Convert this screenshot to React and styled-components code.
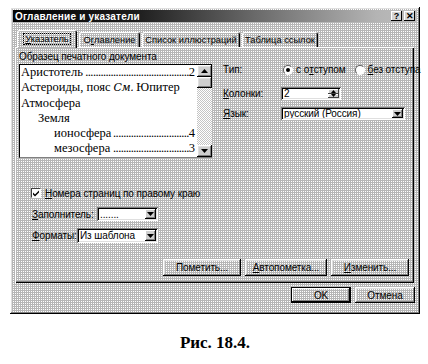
import React from 'react';
import styled, { createGlobalStyle } from 'styled-components';

const Global = createGlobalStyle`
  html, body { margin: 0; padding: 0; background: #fff; }
  body { font-family: "Liberation Sans", Arial, sans-serif; font-size: 10px; color: #000; letter-spacing: -0.1px; }
  #root { width: 428px; height: 364px; overflow: hidden; }
`;

const dither = `
  background-color: #b6b6b6;
  background-image: conic-gradient(#fff 0 25%, #b6b6b6 0 100%);
  background-size: 2px 2px;
`;

const raised = `box-shadow: inset -1px -1px #000, inset 1px 1px #fff, inset -2px -2px #808080, inset 2px 2px #dfdfdf;`;
const sunken = `box-shadow: inset 1px 1px #808080, inset -1px -1px #fff, inset 2px 2px #000, inset -2px -2px #dfdfdf;`;

const Page = styled.div`
  width: 428px;
  height: 364px;
  box-sizing: border-box;
  padding: 7px 0 0 10px;
  display: flex;
  flex-direction: column;
  align-items: flex-start;
`;

const Dialog = styled.div`
  width: 410px;
  height: 307px;
  box-sizing: border-box;
  padding: 3px;
  display: flex;
  flex-direction: column;
  ${raised}
  ${dither}
`;

const TitleBar = styled.div`
  height: 12px;
  display: flex;
  align-items: center;
  padding: 0 2px 0 2px;
  background: linear-gradient(90deg, #050505 0%, #1c1c1c 30%, #6a6a6a 60%, #b4b4b4 90%, #bcbcbc 100%);
  color: #fff;
  font-weight: bold;
  font-size: 10px;
  gap: 1px;
`;

const TitleText = styled.span`
  flex: 1;
  white-space: nowrap;
  letter-spacing: 0.2px;
`;

const TitleButton = styled.div`
  width: 11px;
  height: 10px;
  box-sizing: border-box;
  display: flex;
  align-items: center;
  justify-content: center;
  color: #000;
  font-size: 9px;
  font-weight: bold;
  line-height: 1;
  margin-left: ${p => p.$gap || 0}px;
  background: #d4d4d4;
  box-shadow: inset -1px -1px #000, inset 1px 1px #fff;
`;

const TabStrip = styled.div`
  margin-top: 8px;
  height: 17px;
  display: flex;
  align-items: flex-end;
  padding-left: 4px;
  position: relative;
  z-index: 2;
`;

const Tab = styled.div`
  width: ${p => p.$w}px;
  height: ${p => (p.$active ? 18 : 15)}px;
  margin-bottom: ${p => (p.$active ? -1 : 0)}px;
  margin-right: 2px;
  box-sizing: border-box;
  display: flex;
  align-items: center;
  justify-content: center;
  white-space: nowrap;
  font-size: 9.3px;
  letter-spacing: 0;
  border-radius: 2px 2px 0 0;
  ${dither}
  box-shadow: inset 1px 1px #fff, inset -1px 0 #000, inset -2px 0 #808080;
`;

const Focus = styled.span`
  outline: 1px dotted #000;
  padding: 0 1px;
`;

const Panel = styled.div`
  height: 236px;
  margin: 0 3px 0 2px;
  box-sizing: border-box;
  padding: 5px 5px 7px 4px;
  display: flex;
  flex-direction: column;
  position: relative;
  z-index: 1;
  box-shadow: inset 1px 1px #fff, inset -1px -1px #000, inset -2px -2px #808080;
`;

const TopSection = styled.div`
  display: flex;
  gap: 11px;
`;

const LeftCol = styled.div`
  width: 194px;
  display: flex;
  flex-direction: column;
`;

const GroupLabel = styled.div`
  height: 12px;
  line-height: 10px;
  white-space: nowrap;
`;

const Preview = styled.div`
  height: 94px;
  display: flex;
  background: #fff;
  box-sizing: border-box;
  border-top: 1px solid #000;
  border-left: 1px solid #000;
  border-bottom: 1px solid #808080;
`;

const PreviewText = styled.div`
  flex: 1;
  min-width: 0;
  overflow: hidden;
  padding: 0 2px 0 1px;
  font-family: "Liberation Serif", "Times New Roman", serif;
  font-size: 12.5px;
  line-height: 15.3px;
  letter-spacing: 0;
`;

const Line = styled.div`
  display: flex;
  white-space: nowrap;
  padding-left: ${p => p.$indent || 0}px;
`;

const Leader = styled.span`
  flex: 1;
  min-width: 0;
  text-align: right;
  padding-left: 1px;
  letter-spacing: -0.6px;
`;

const See = styled.span`
  font-style: italic;
  font-family: "DejaVu Serif", serif;
  font-size: 11px;
  letter-spacing: -0.5px;
`;

const Scrollbar = styled.div`
  width: 15px;
  display: flex;
  flex-direction: column;
  background-color: #d0d0d0;
  background-image: conic-gradient(#fff 0 25%, #c4c4c4 0 50%, #fff 0 75%, #c4c4c4 0 100%);
  background-size: 2px 2px;
`;

const ScrollBtn = styled.div`
  height: 12px;
  display: flex;
  align-items: center;
  justify-content: center;
  background: #cfcfcf;
  ${raised}
`;

const Thumb = styled.div`
  height: 11px;
  background: #cfcfcf;
  ${raised}
`;

const Spacer = styled.div`
  flex: 1;
`;

const RightCol = styled.div`
  display: flex;
  flex-direction: column;
  padding-top: 11px;
`;

const OptionRow = styled.div`
  height: 13px;
  display: flex;
  align-items: center;
  margin-top: ${p => p.$mt || 0}px;
  white-space: nowrap;
`;

const OptionLabel = styled.span`
  width: ${p => p.$w || 58}px;
  flex-shrink: 0;
`;

const RadioGroup = styled.label`
  display: flex;
  align-items: center;
  margin-left: ${p => p.$ml || 0}px;
`;

const RadioCircle = styled.span`
  width: 10px;
  height: 10px;
  border-radius: 50%;
  box-sizing: border-box;
  background: #fff;
  border: 1px solid;
  border-color: #606060 #fff #fff #606060;
  display: flex;
  align-items: center;
  justify-content: center;
  margin-right: 3px;
  &::after {
    content: "";
    width: 4px;
    height: 4px;
    border-radius: 50%;
    background: ${p => (p.$checked ? '#000' : 'transparent')};
  }
`;

const Field = styled.div`
  width: ${p => p.$w}px;
  height: ${p => p.$h || 13}px;
  box-sizing: border-box;
  display: flex;
  align-items: stretch;
  background: #fff;
  padding: 2px;
  ${sunken}
`;

const FieldText = styled.span`
  flex: 1;
  display: flex;
  align-items: center;
  padding-left: 1px;
  font-size: 10px;
  white-space: nowrap;
  overflow: hidden;
`;

const SpinCol = styled.div`
  width: 11px;
  display: flex;
  flex-direction: column;
`;

const SpinHalf = styled.div`
  flex: 1;
  display: flex;
  align-items: center;
  justify-content: center;
  background: #cfcfcf;
  box-shadow: inset -1px -1px #404040, inset 1px 1px #fff;
`;

const DropBtn = styled.div`
  width: 11px;
  display: flex;
  align-items: center;
  justify-content: center;
  background: #cfcfcf;
  box-shadow: inset -1px -1px #000, inset 1px 1px #fff, inset -2px -2px #808080;
`;

const BottomSection = styled.div`
  display: flex;
  flex-direction: column;
  padding-left: 13px;
`;

const CheckRow = styled.label`
  display: flex;
  align-items: center;
  margin-top: 29px;
  height: 12px;
  white-space: nowrap;
`;

const CheckBox = styled.span`
  width: 10px;
  height: 10px;
  box-sizing: border-box;
  margin-left: -1px;
  margin-right: 4px;
  background: #fff;
  border: 1px solid;
  border-color: #404040 #fff #fff #404040;
  display: flex;
  align-items: center;
  justify-content: center;
`;

const FormRow = styled.div`
  display: flex;
  align-items: center;
  margin-top: ${p => p.$mt}px;
  white-space: nowrap;
`;

const ButtonRow = styled.div`
  margin-top: auto;
  display: flex;
  justify-content: flex-end;
  gap: 4px;
`;

const Button = styled.div`
  width: ${p => p.$w}px;
  height: ${p => p.$h || 17}px;
  box-sizing: border-box;
  display: flex;
  align-items: center;
  justify-content: center;
  white-space: nowrap;
  font-size: 10px;
  ${dither}
  ${p =>
    p.$default
      ? 'box-shadow: inset 0 0 0 1px #000, inset -2px -2px #000, inset 2px 2px #fff, inset -3px -3px #808080;'
      : raised}
`;

const DialogButtons = styled.div`
  margin-top: 4px;
  margin-right: 2px;
  display: flex;
  justify-content: flex-end;
  gap: 4px;
`;

const Caption = styled.div`
  width: 410px;
  margin-top: 20px;
  text-align: center;
  font-family: "Liberation Serif", "Times New Roman", serif;
  font-weight: bold;
  font-size: 17px;
  line-height: 18px;
  letter-spacing: 0;
`;

const Arrow = ({ dir = 'down', size = 5 }) => (
  <svg width={size + 2} height={Math.ceil(size / 2) + 1} viewBox="0 0 7 4" aria-hidden="true">
    {dir === 'down' ? <path d="M0 0h7L3.5 4z" fill="#000" /> : <path d="M0 4h7L3.5 0z" fill="#000" />}
  </svg>
);

const CheckMark = () => (
  <svg width="8" height="8" viewBox="0 0 8 8" aria-hidden="true">
    <path d="M1 3.5l2 2L7 1.5v2L3 7.5 1 5.5z" fill="#000" />
  </svg>
);

const lines = [
  { t: 'Аристотель', n: '2', d: 41, i: 0 },
  { t: 'Астероиды, пояс ', see: 'См.', rest: ' Юпитер', i: 0 },
  { t: 'Атмосфера', i: 0 },
  { t: 'Земля', i: 17 },
  { t: 'ионосфера', n: '4', d: 30, i: 33 },
  { t: 'мезосфера', n: '3', d: 30, i: 33 },
  { t: 'стратосфера', n: '5', d: 27, i: 33 },
];

export default function App() {
  return (
    <>
      <Global />
      <Page>
        <Dialog>
          <TitleBar>
            <TitleText>Оглавление и указатели</TitleText>
            <TitleButton>?</TitleButton>
            <TitleButton $gap={1}>✕</TitleButton>
          </TitleBar>

          <TabStrip>
            <Tab $active $w={60}>
              <Focus><u>У</u>казатель</Focus>
            </Tab>
            <Tab $w={61}>О<u>г</u>лавление</Tab>
            <Tab $w={98}>Список иллюстраций</Tab>
            <Tab $w={76}>Таблица ссылок</Tab>
          </TabStrip>

          <Panel>
            <TopSection>
              <LeftCol>
                <GroupLabel>Образец печатного документа</GroupLabel>
                <Preview>
                  <PreviewText>
                    {lines.map((l, k) => (
                      <Line key={k} $indent={l.i}>
                        <span>
                          {l.t}
                          {l.see && <See>{l.see}</See>}
                          {l.rest}
                        </span>
                        {l.n && (
                          <>
                            <Leader>{'.'.repeat(l.d)}</Leader>
                            <span>{l.n}</span>
                          </>
                        )}
                      </Line>
                    ))}
                  </PreviewText>
                  <Scrollbar>
                    <ScrollBtn><Arrow dir="up" /></ScrollBtn>
                    <Thumb />
                    <Spacer />
                    <ScrollBtn><Arrow dir="down" /></ScrollBtn>
                  </Scrollbar>
                </Preview>
              </LeftCol>

              <RightCol>
                <OptionRow>
                  <OptionLabel>Тип:</OptionLabel>
                  <RadioGroup $ml={2}>
                    <RadioCircle $checked />
                    с о<u>т</u>ступом
                  </RadioGroup>
                  <RadioGroup $ml={9}>
                    <RadioCircle />
                    <u>б</u>ез отступа
                  </RadioGroup>
                </OptionRow>
                <OptionRow $mt={11}>
                  <OptionLabel><u>К</u>олонки:</OptionLabel>
                  <Field $w={60}>
                    <FieldText>2</FieldText>
                    <SpinCol>
                      <SpinHalf><Arrow dir="up" size={3} /></SpinHalf>
                      <SpinHalf><Arrow dir="down" size={3} /></SpinHalf>
                    </SpinCol>
                  </Field>
                </OptionRow>
                <OptionRow $mt={7}>
                  <OptionLabel><u>Я</u>зык:</OptionLabel>
                  <Field $w={124}>
                    <FieldText>русский (Россия)</FieldText>
                    <DropBtn><Arrow /></DropBtn>
                  </Field>
                </OptionRow>
              </RightCol>
            </TopSection>

            <BottomSection>
              <CheckRow>
                <CheckBox><CheckMark /></CheckBox>
                <span><u>Н</u>омера страниц по правому краю</span>
              </CheckRow>
              <FormRow $mt={8}>
                <OptionLabel $w={65}><u>З</u>аполнитель:</OptionLabel>
                <Field $w={61} $h={14}>
                  <FieldText>.......</FieldText>
                  <DropBtn><Arrow /></DropBtn>
                </Field>
              </FormRow>
              <FormRow $mt={7}>
                <OptionLabel $w={45}><u>Ф</u>орматы:</OptionLabel>
                <Field $w={81} $h={15}>
                  <FieldText>Из шаблона</FieldText>
                  <DropBtn><Arrow /></DropBtn>
                </Field>
              </FormRow>
            </BottomSection>

            <ButtonRow>
              <Button $w={78}>Пометить...</Button>
              <Button $w={82}><span><u>А</u>втопометка...</span></Button>
              <Button $w={78}><span><u>И</u>зменить...</span></Button>
            </ButtonRow>
          </Panel>

          <DialogButtons>
            <Button $w={60} $h={16} $default>OK</Button>
            <Button $w={60} $h={16}>Отмена</Button>
          </DialogButtons>
        </Dialog>
        <Caption>Рис. 18.4.</Caption>
      </Page>
    </>
  );
}
